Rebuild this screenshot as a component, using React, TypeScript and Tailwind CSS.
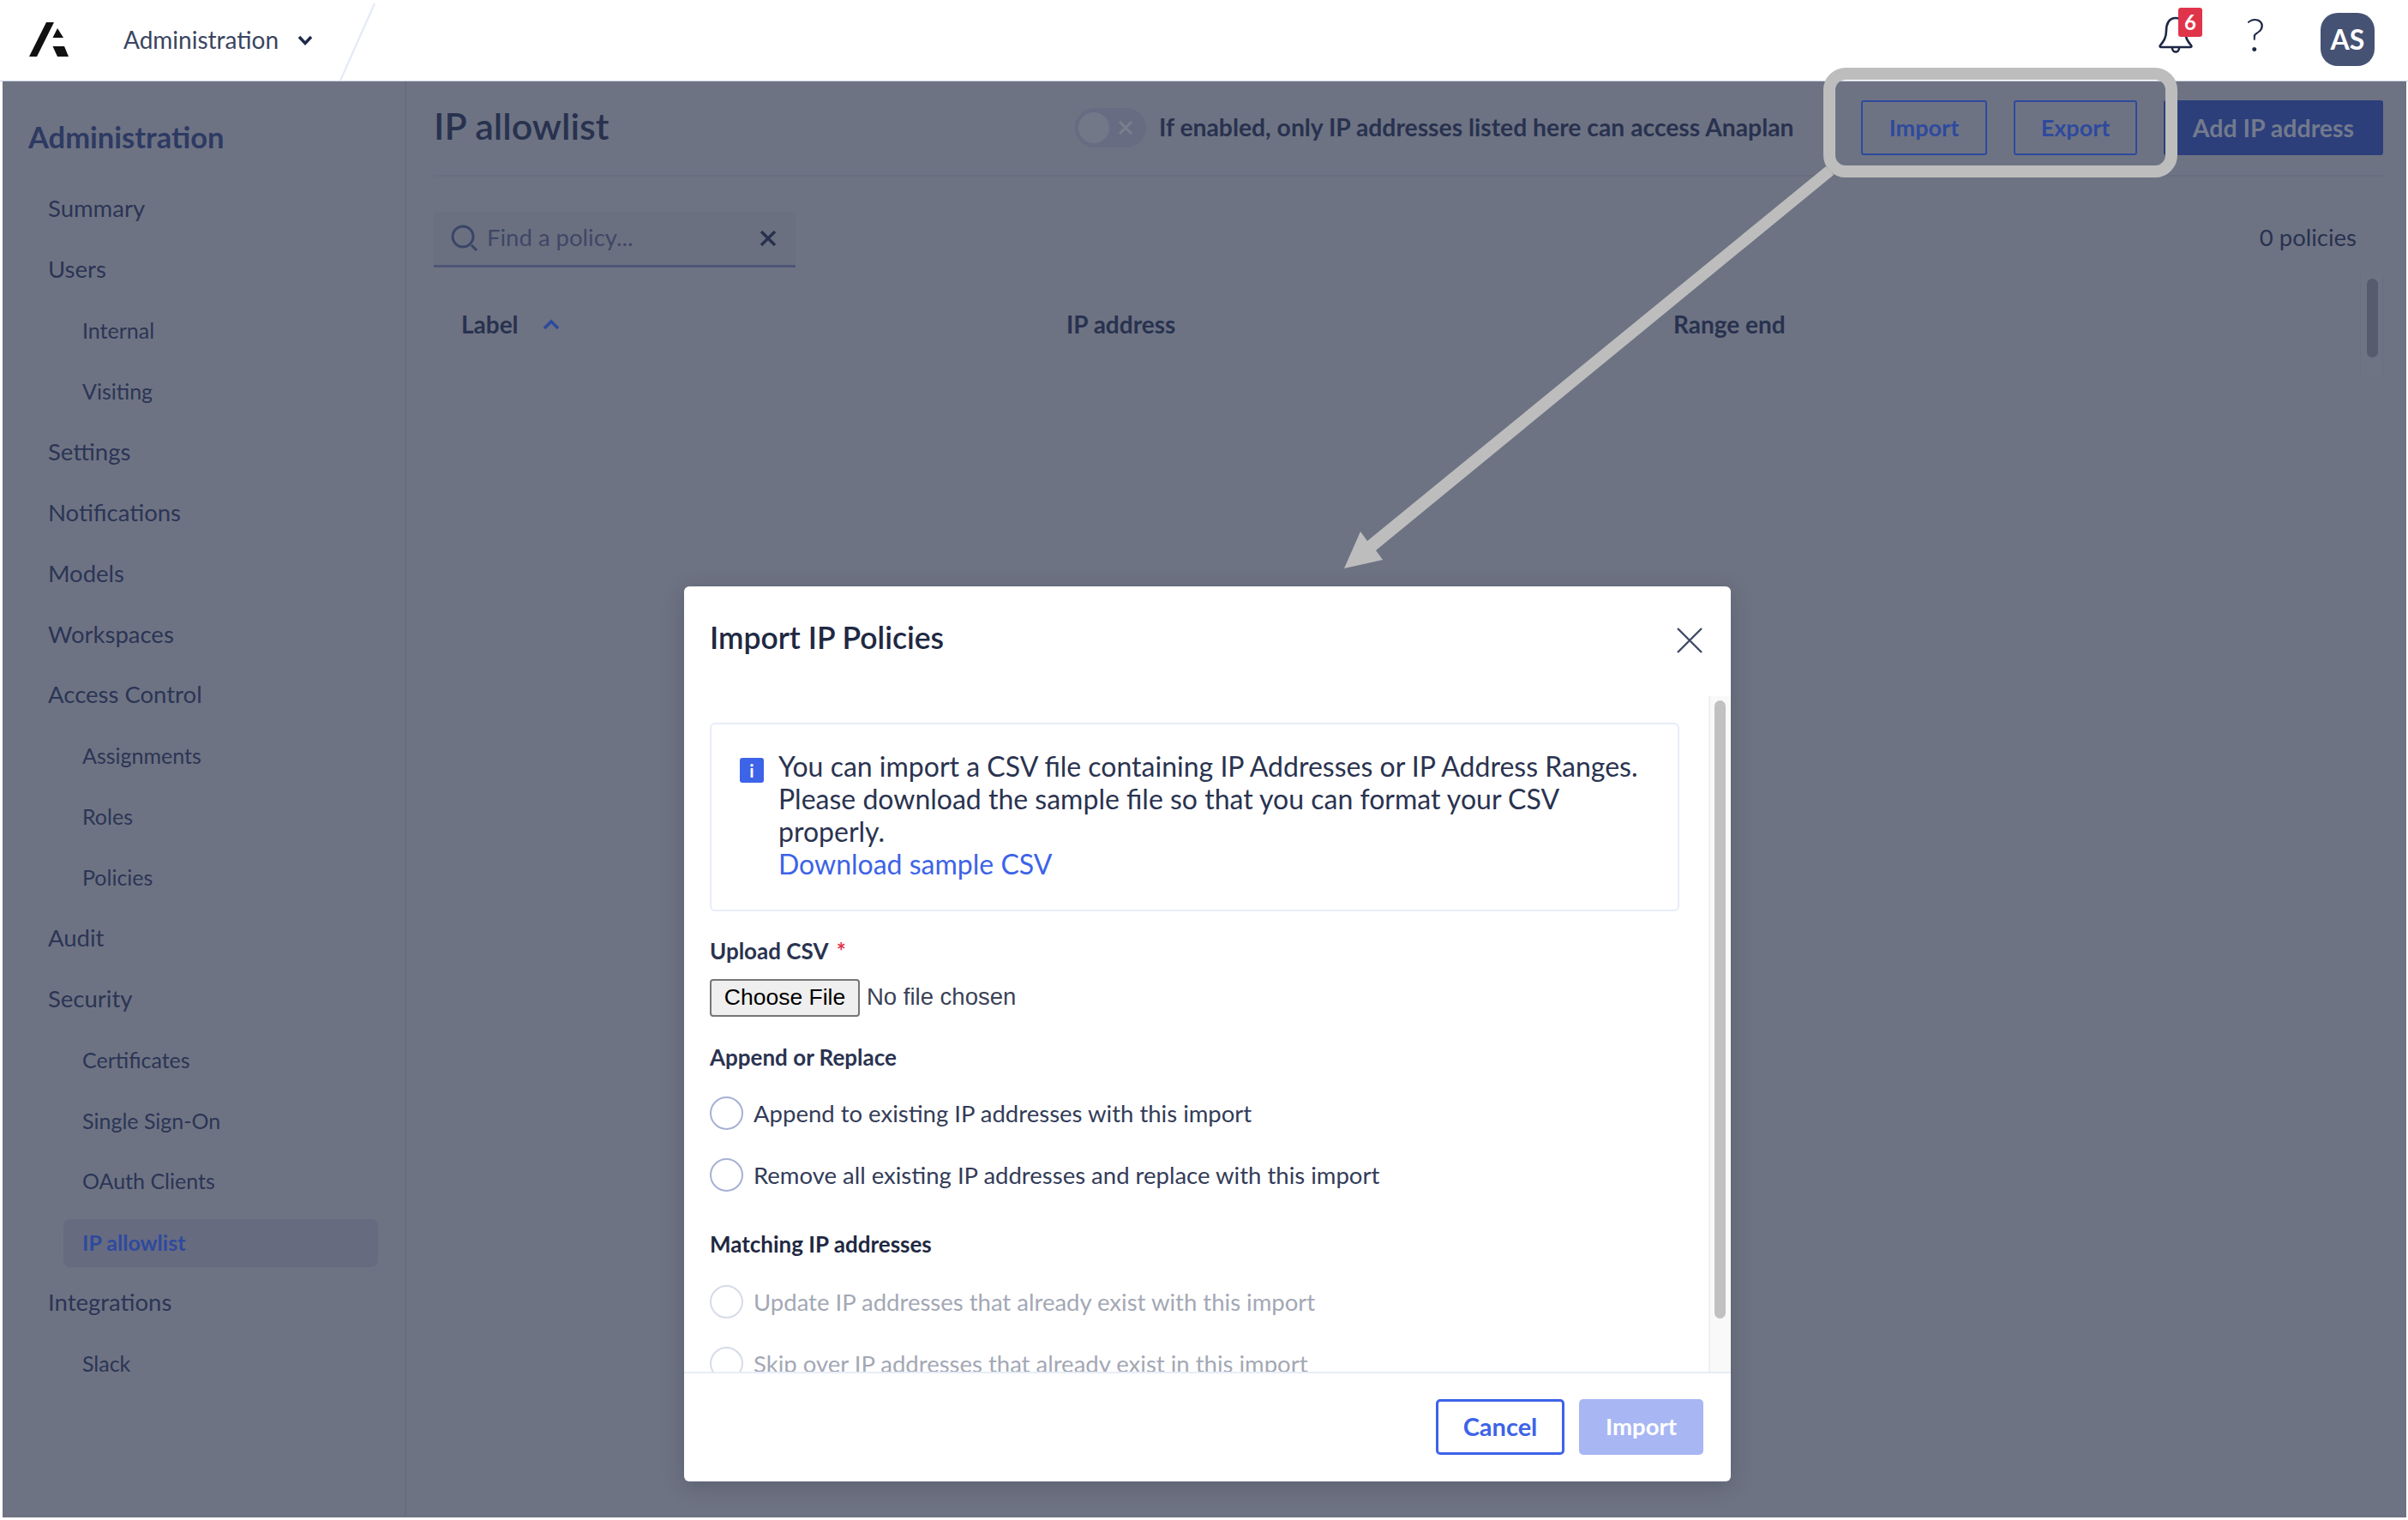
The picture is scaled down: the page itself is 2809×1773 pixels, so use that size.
import React from "react";

const font = { fontFamily: '"Lato", "Open Sans", sans-serif' };

function Row({ label, sub }: { label: string; sub?: boolean }) {
  return (
    <div className={`flex h-[70.9px] items-center text-[#2b3555] ${sub ? "pl-[93px] text-[25px]" : "pb-[2px] pl-[53px] text-[27.5px]"}`}>
      {label}
    </div>
  );
}

function Radio({ label, disabled }: { label: string; disabled?: boolean }) {
  return (
    <div className={`flex h-[39px] items-center gap-[12px] whitespace-nowrap text-[27.5px] ${disabled ? "text-[#a3a8b5]" : "text-[#333c58]"}`}>
      <span className={`h-[39px] w-[39px] shrink-0 rounded-full border-2 bg-white ${disabled ? "border-[#d6dbe9]" : "border-[#a6b1d4]"}`} />
      <span className="pt-[1px]">{label}</span>
    </div>
  );
}

function Logo() {
  return (
    <svg width="48" height="41" viewBox="0 0 48 41" className="shrink-0">
      <path d="M20 0H29L9 40H0Z" fill="#111" />
      <path d="M33 7L40 18H27.5Z" fill="#111" />
      <path d="M27.5 28H41L46 40H33Z" fill="#111" />
    </svg>
  );
}

export default function App() {
  return (
    <div style={font} className="relative h-[1773px] w-[2809px] overflow-hidden bg-white">
      {/* top bar */}
      <header className="flex h-[95px] items-center border-b border-[#c9cfdf] pr-[39px]">
        <div className="ml-[34px] mt-[-2px]"><Logo /></div>
        <div className="ml-[62px] mt-[-2px] text-[28px] text-[#3a4560]">Administration</div>
        <svg width="18" height="12" viewBox="0 0 18 12" className="ml-[22px]">
          <path d="M2 2L9 9.5L16 2" fill="none" stroke="#1f2a4a" strokeWidth="3.4" />
        </svg>
        <svg width="44" height="95" viewBox="0 0 44 95" className="ml-[31px]">
          <path d="M41 4L1 94" stroke="#e3e8f8" strokeWidth="2" fill="none" />
        </svg>
        <div className="ml-auto flex items-center">
          <div className="relative mr-[60px] mt-[-15px] h-[44px] w-[40px]">
            <svg width="40" height="46" viewBox="0 0 40 46" className="absolute left-0 top-0">
              <path d="M20 3C12 3 9 10 9 18C9 26 6 30 2 35C1 36.500 2 37 3 37H37C38 37 39 36.500 38 35C34 30 31 26 31 18C31 10 28 3 20 3Z" fill="none" stroke="#1d2746" strokeWidth="2.6" />
              <path d="M16 38C16 44 24 44 24 38" fill="none" stroke="#1d2746" strokeWidth="2.6" />
            </svg>
            <span className="absolute left-[23px] top-[-9px] flex h-[34px] w-[28px] items-center justify-center rounded-[3px] bg-[#e0344a] text-[24px] font-bold text-white">6</span>
          </div>
          <span className="mr-[63px] mt-[-14px] flex w-[26px] justify-center text-[54px] font-light leading-none text-[#1d2746]">?</span>
          <div className="mt-[-2px] flex h-[62px] w-[63px] items-center justify-center rounded-[20px] bg-[#455273] text-[32px] font-bold text-white">AS</div>
        </div>
      </header>

      {/* dimmed application */}
      <div className="ml-[3px] mr-[2px] flex h-[1675px] bg-[#6e7383]">
        <aside className="w-[471px] shrink-0 border-r-2 border-[#676c80]">
          <div className="flex h-[113.5px] items-start pl-[30px] pt-[40px] text-[34.5px] font-bold leading-[50px] text-[#2d3a63]">Administration</div>
          <Row label="Summary" />
          <Row label="Users" />
          <Row label="Internal" sub />
          <Row label="Visiting" sub />
          <Row label="Settings" />
          <Row label="Notifications" />
          <Row label="Models" />
          <Row label="Workspaces" />
          <Row label="Access Control" />
          <Row label="Assignments" sub />
          <Row label="Roles" sub />
          <Row label="Policies" sub />
          <Row label="Audit" />
          <Row label="Security" />
          <Row label="Certificates" sub />
          <Row label="Single Sign-On" sub />
          <Row label="OAuth Clients" sub />
          <div className="flex h-[70.9px] items-center pl-[71px] pt-[2px]">
            <div className="flex h-[56px] w-[367px] items-center rounded-[8px] bg-[#676b80] pl-[22px] text-[25px] font-bold text-[#2e4a9e]">IP allowlist</div>
          </div>
          <Row label="Integrations" />
          <Row label="Slack" sub />
        </aside>

        <main className="flex min-w-0 flex-1 flex-col pl-[32px] pr-[27px]">
          <div className="flex h-[111px] shrink-0 items-center justify-between border-b-2 border-[#686d82] pb-[1px]">
            <h1 className="pb-[3px] text-[43px] font-semibold text-[#28324f]">IP allowlist</h1>
            <div className="flex items-center">
              <div className="relative h-[46px] w-[83px] rounded-full bg-[#676c82]">
                <span className="absolute left-[1px] top-[2px] h-[42px] w-[42px] rounded-full border-[3px] border-[#676c82] bg-[#737888] outline outline-1 outline-[#676c82]" />
                <svg width="18" height="18" viewBox="0 0 18 18" className="absolute left-[50px] top-[14px]">
                  <path d="M2 2L16 16M16 2L2 16" stroke="#7a7f8e" strokeWidth="3" />
                </svg>
              </div>
              <span className="ml-[15px] w-[740px] whitespace-nowrap pb-[2px] text-[28.3px] font-bold text-[#28324f]">If enabled, only IP addresses listed here can access Anaplan</span>
              <button className="ml-[79px] h-[64px] w-[147px] rounded-[3px] border-2 border-[#2e4a9e] text-[27px] font-bold text-[#2e4a9e]">Import</button>
              <button className="ml-[31px] h-[64px] w-[144px] rounded-[3px] border-2 border-[#2e4a9e] text-[27px] font-bold text-[#2e4a9e]">Export</button>
              <button className="ml-[31px] h-[64px] w-[256px] rounded-[3px] bg-[#2c3f7b] text-[28.5px] font-bold text-[#737a8d]">Add IP address</button>
            </div>
          </div>

          <div className="mt-[41px] flex shrink-0 items-center justify-between">
            <div className="flex h-[65px] w-[422px] items-center border-b-[3px] border-[#4d5677] bg-[#6b7080] pl-[20px] pr-[22px]">
              <svg width="32" height="32" viewBox="0 0 32 32" className="shrink-0">
                <circle cx="14" cy="14" r="12" fill="none" stroke="#3a4668" strokeWidth="3" />
                <path d="M24 24L30 30" stroke="#3a4668" strokeWidth="3" />
              </svg>
              <span className="ml-[10px] flex-1 pb-[2px] text-[27.5px] text-[#3e4766]">Find a policy...</span>
              <svg width="20" height="18" viewBox="0 0 20 18">
                <path d="M2 1L18 17M18 1L2 17" stroke="#27314f" strokeWidth="3.4" />
              </svg>
            </div>
            <span className="pb-[5px] pr-[31px] text-[27.5px] text-[#28324f]">0 policies</span>
          </div>

          <div className="mt-[8px] flex min-h-0 flex-1">
            <div className="grid h-[116px] flex-1 grid-cols-[706px_708px_1fr] items-center pl-[32px] text-[28px] font-bold text-[#28324f]">
              <div className="flex items-center gap-[28px]">
                Label
                <svg width="20" height="13" viewBox="0 0 20 13">
                  <path d="M2 11L10 3L18 11" fill="none" stroke="#2e4a9e" strokeWidth="3.6" />
                </svg>
              </div>
              <div>IP address</div>
              <div>Range end</div>
            </div>
            <div className="h-[118px] w-[27px] shrink-0 border-x border-[#696e80] bg-[#6f7484] pl-[7px] pr-[5px] pt-[5px]">
              <div className="h-[92px] rounded-full bg-[#565b6d]" />
            </div>
          </div>
        </main>
      </div>

      {/* annotation */}
      <div className="absolute left-[2127px] top-[79px] h-[128px] w-[413px] rounded-[26px] border-[14px] border-[#bdbdbd]" />
      <svg width="600" height="500" viewBox="0 0 600 500" className="absolute left-[1560px] top-[180px]">
        <path d="M570 14L579 24L45 462L53 473L8 483L27 440L35 451Z" fill="#bdbdbd" />
      </svg>

      {/* dialog */}
      <div className="absolute left-[798px] top-[684px] flex h-[1044px] w-[1221px] flex-col rounded-[6px] bg-white shadow-[0_6px_24px_rgba(40,44,60,0.25)]">
        <div className="relative flex h-[128px] shrink-0 items-start pl-[30px] pt-[38px]">
          <h2 className="text-[35.5px] font-semibold leading-[44px] text-[#1f2942]">Import IP Policies</h2>
          <svg width="32" height="32" viewBox="0 0 32 32" className="absolute right-[32px] top-[47px]">
            <path d="M2 2L30 30M30 2L2 30" stroke="#3f4a66" strokeWidth="2.4" />
          </svg>
        </div>

        <div className="flex min-h-0 flex-1">
          <div className="min-w-0 flex-1 overflow-hidden pl-[30px] pr-[34px] pt-[31px]">
            <div className="flex h-[220px] rounded-[6px] border-2 border-[#e8ecf8] pl-[33px] pt-[31px]">
              <span className="mt-[8px] flex h-[29px] w-[28px] shrink-0 items-center justify-center rounded-[3px] bg-[#3d63e8] text-[21px] font-bold text-white">i</span>
              <div className="ml-[17px] mt-[-1px] text-[32px] leading-[38px] text-[#2a3350]">
                You can import a CSV file containing IP Addresses or IP Address Ranges.<br />
                Please download the sample file so that you can format your CSV<br />
                properly.<br />
                <a className="text-[#3d63e8]">Download sample CSV</a>
              </div>
            </div>

            <div className="mt-[30px] text-[26px] font-bold leading-[32px] text-[#2a3350]">Upload CSV <span className="ml-[4px] text-[#e0344a]">*</span></div>
            <div className="mt-[17px] flex items-center">
              <button style={{ fontFamily: '"Liberation Sans", sans-serif' }} className="h-[44px] w-[175px] rounded-[4px] border-2 border-[#767676] bg-[#efefef] text-[26.5px] text-black">Choose File</button>
              <span style={{ fontFamily: '"Liberation Sans", sans-serif' }} className="ml-[8px] pb-[2px] text-[27.5px] text-[#3a4256]">No file chosen</span>
            </div>

            <div className="mt-[32px] text-[26px] font-bold leading-[30px] text-[#2a3350]">Append or Replace</div>
            <div className="mt-[31px]"><Radio label="Append to existing IP addresses with this import" /></div>
            <div className="mt-[33px]"><Radio label="Remove all existing IP addresses and replace with this import" /></div>

            <div className="mt-[46px] text-[26px] font-bold leading-[30px] text-[#1f2942]">Matching IP addresses</div>
            <div className="mt-[33px]"><Radio disabled label="Update IP addresses that already exist with this import" /></div>
            <div className="mt-[33px]"><Radio disabled label="Skip over IP addresses that already exist in this import" /></div>
          </div>
          <div className="w-[26px] shrink-0 border-l-2 border-[#efefef] bg-[#f9f9f9] pl-[5px] pr-[6px] pt-[5px]">
            <div className="h-[721px] rounded-full bg-[#c1c1c1]" />
          </div>
        </div>

        <div className="flex h-[128px] shrink-0 items-start justify-end gap-[17px] border-t-2 border-[#e8ecf8] pr-[32px] pt-[30px]">
          <button className="h-[65px] w-[150px] rounded-[5px] border-[3px] border-[#3d63e8] pb-[2px] text-[29px] font-bold text-[#3d63e8]">Cancel</button>
          <button className="h-[65px] w-[145px] rounded-[5px] bg-[#a8b7f3] pb-[2px] text-[27.5px] font-bold text-white">Import</button>
        </div>
      </div>
    </div>
  );
}
